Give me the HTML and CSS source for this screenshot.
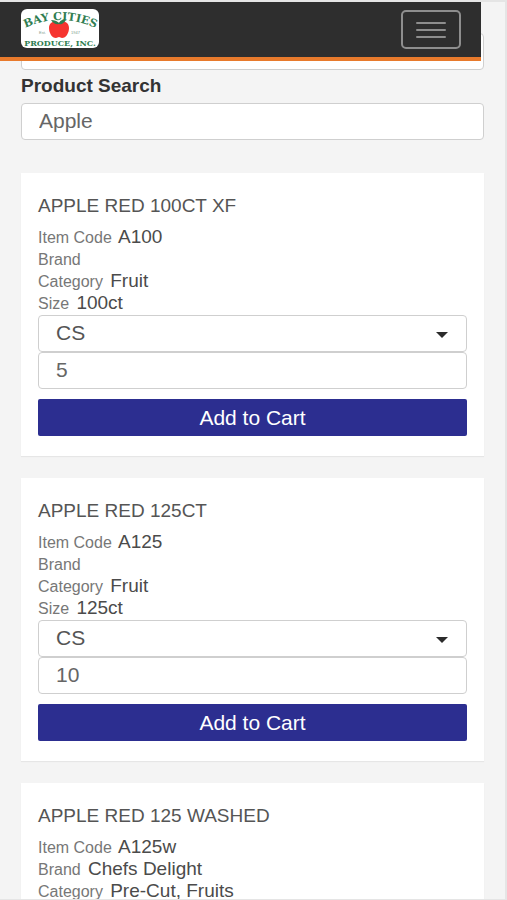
FILE: index.html
```html
<!DOCTYPE html>
<html lang="en">
<head>
<meta charset="utf-8">
<meta name="viewport" content="width=device-width, initial-scale=1">
<title>Bay Cities Produce</title>
<link rel="stylesheet" href="styles.css">
</head>
<body>
<header class="navbar">
  <a class="brand" href="#" aria-label="Bay Cities Produce, Inc.">
    <svg class="logo" viewBox="0 0 78 39" aria-hidden="true">
      <rect width="78" height="39" rx="6" fill="#fff"/>
      <path id="arc" d="M2 20Q39 2 77 20" fill="none"/>
      <text class="logo-text logo-top"><textPath href="#arc" startOffset="50%" text-anchor="middle">BAY CITIES</textPath></text>
      <path d="M38 14C34 11 28 13 28 19C28 24 31 29 35 29L38 28L41 29C45 29 48 24 48 19C48 13 42 11 38 14Z" fill="#f6342f"/>
      <path d="M30 11Q35 11 38 14Q40 10 45 11Q42 16 38 15Q33 16 30 11Z" fill="#2f7d51"/>
      <text class="logo-small" x="18" y="25">Est.</text>
      <text class="logo-small" x="50" y="25">1947</text>
      <text class="logo-text logo-bottom" x="39" y="37" text-anchor="middle">PRODUCE, INC.</text>
    </svg>
  </a>
  <button class="toggle" type="button" aria-label="Toggle navigation">
    <span class="bar"></span><span class="bar"></span><span class="bar"></span>
  </button>
</header>
<main class="content">
  <input class="control field" type="text" aria-label="Category">
  <label class="search-label" for="search">Product Search</label>
  <input class="control field" id="search" type="text" value="Apple">

  <div class="products">
    <article class="card">
      <h2 class="name">APPLE RED 100CT XF</h2>
      <p class="detail"><span class="key">Item Code</span> A100</p>
      <p class="detail"><span class="key">Brand</span></p>
      <p class="detail"><span class="key">Category</span> Fruit</p>
      <p class="detail"><span class="key">Size</span> 100ct</p>
      <div class="picker"><select class="control unit" aria-label="Unit"><option>CS</option></select></div>
      <input class="control" type="text" value="5" aria-label="Quantity">
      <button class="add" type="button">Add to Cart</button>
    </article>
    <article class="card">
      <h2 class="name">APPLE RED 125CT</h2>
      <p class="detail"><span class="key">Item Code</span> A125</p>
      <p class="detail"><span class="key">Brand</span></p>
      <p class="detail"><span class="key">Category</span> Fruit</p>
      <p class="detail"><span class="key">Size</span> 125ct</p>
      <div class="picker"><select class="control unit" aria-label="Unit"><option>CS</option></select></div>
      <input class="control" type="text" value="10" aria-label="Quantity">
      <button class="add" type="button">Add to Cart</button>
    </article>
    <article class="card">
      <h2 class="name">APPLE RED 125 WASHED</h2>
      <p class="detail"><span class="key">Item Code</span> A125w</p>
      <p class="detail"><span class="key">Brand</span> Chefs Delight</p>
      <p class="detail"><span class="key">Category</span> Pre-Cut, Fruits</p>
    </article>
  </div>
</main>
</body>
</html>
```
FILE: styles.css
```css
* {
  box-sizing: border-box;
}

body {
  margin: 0;
  height: 100vh;
  overflow: hidden;
  border: 2px solid #e5e5e5;
  border-width: 2px 2px 1px 0;
  background: #f4f4f4;
  color: #4b4b4b;
  font-family: "Liberation Sans", Arial, sans-serif;
}

.navbar {
  position: fixed;
  top: 2px;
  left: 0;
  right: 26px;
  z-index: 2;
  display: flex;
  align-items: flex-start;
  justify-content: space-between;
  height: 59px;
  padding: 7px 20px 0 21px;
  background: #2e2e2e;
  border-bottom: 4px solid #e87a2c;
}

.brand,
.logo {
  display: block;
  width: 78px;
  height: 39px;
}

.logo-text {
  font-family: "DejaVu Serif", serif;
  font-weight: bold;
  fill: #2f7d51;
}

.logo-top {
  font-size: 11px;
}

.logo-bottom {
  font-size: 8px;
}

.logo-small {
  font-size: 4px;
  fill: #7d9c8b;
}

.toggle {
  display: flex;
  flex-direction: column;
  align-items: center;
  justify-content: center;
  gap: 5px;
  width: 60px;
  height: 39px;
  margin-top: 1px;
  padding: 0;
  background: none;
  border: 2px solid #8e8e8e;
  border-radius: 5px;
}

.bar {
  width: 30px;
  height: 2px;
  border-radius: 1px;
  background: #8e8e8e;
}

.content {
  padding: 31px 21px 0;
}

.control {
  display: block;
  width: 100%;
  height: 37px;
  margin: 0;
  padding: 0 17px 2px;
  background: #fff;
  border: 1px solid #cfcfcf;
  border-radius: 4px;
  color: #666;
  font: 21px/24px "Liberation Sans", Arial, sans-serif;
}

.search-label {
  display: block;
  padding: 4px 0 5px;
  color: #333;
  font-size: 19px;
  font-weight: bold;
  line-height: 24px;
}

.products {
  display: grid;
  gap: 22px;
  margin-top: 33px;
}

.card {
  padding: 20px 17px;
  background: #fff;
  box-shadow: 0 1px 1px #e6e6e6;
}

.name {
  margin: 0 0 7px;
  color: #555;
  font-size: 19px;
  font-weight: normal;
  line-height: 26px;
}

.detail {
  margin: 0;
  font-size: 19px;
  line-height: 22px;
}

.key {
  margin-right: 2px;
  color: #777;
  font-size: 16px;
  line-height: 16px;
}

.picker {
  position: relative;
  margin-top: 1px;
}

.picker::after {
  content: "";
  position: absolute;
  top: 17px;
  right: 19px;
  border: 6px solid transparent;
  border-top-color: #2b2b2b;
  border-bottom: 0;
  pointer-events: none;
}

.unit {
  appearance: none;
  color: #555;
}

.add {
  display: block;
  width: 100%;
  height: 37px;
  margin-top: 10px;
  padding: 0;
  background: #2c2e90;
  border: 0;
  border-radius: 2px;
  color: #fff;
  font: 21px/24px "Liberation Sans", Arial, sans-serif;
}
```
